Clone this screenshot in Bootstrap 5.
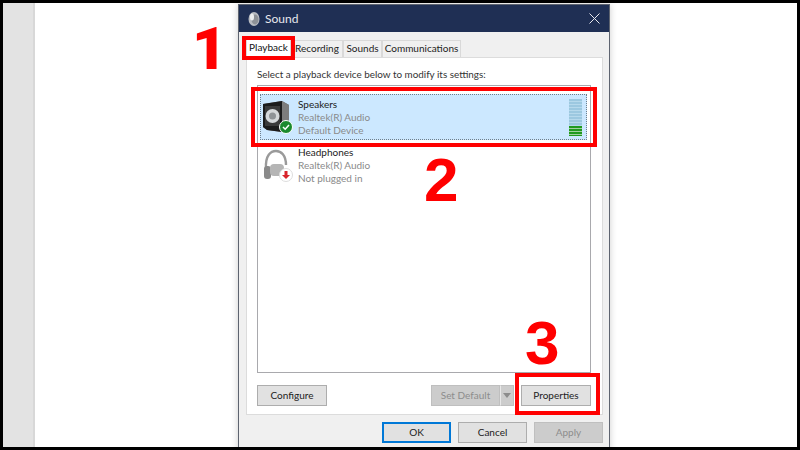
<!DOCTYPE html>
<html lang="en">
<head>
  <meta charset="UTF-8">
  <meta name="viewport" content="width=device-width, initial-scale=1.0">
  <title>Sound</title>
  <link href="https://cdn.jsdelivr.net/npm/bootstrap@5.3.0/dist/css/bootstrap.min.css" rel="stylesheet">
  <style>
    html, body { height: 100%; overflow: hidden; }
    body { background: #fff; font-family: Lato, "Open Sans", "Liberation Sans", sans-serif; font-size: 10px; color: #222; }
    .stage { position: relative; width: 800px; height: 450px; border: 3px solid #000; background: #fff; overflow: hidden; }
    .side-strip { width: 32px; height: 100%; background: #e3e3e3; border-right: 2px solid #d8d8d8; }
    .sound-win { position: absolute; left: 235px; top: 1px; width: 372px; height: 450px; background: #f0f0f0; border-left: 1px solid #5e6470; border-right: 1px solid #5e6470; border-top: 1px solid #5e6470; box-shadow: 0 0 7px rgba(0,0,0,.2); }
    .win-title { height: 27px; background: #1f2f54; color: #e8e8ee; font-size: 12px; padding-left: 8px; gap: 4px; }
    .win-close { margin-left: auto; margin-right: 9px; }
    .tab-strip { padding: 8px 0 0 7px; height: 25px; }
    .tab-item { height: 17px; background: #f0f0f0; border: 1px solid #d9d9d9; border-bottom: 0; white-space: nowrap; line-height: 15px; text-align: center; }
    .tab-on { background: #fff; width: 45px; height: 19px; margin-top: -2px; color: #111; line-height: 17px; }
    .tab-rec { width: 52px; }
    .tab-snd { width: 39px; }
    .tab-com { width: 79px; }
    .tab-pane-box { margin: 0 6px 0 7px; height: 358px; background: #fff; border: 1px solid #dcdcdc; padding: 9px 11px 0 10px; }
    .hint-line { height: 18px; line-height: 14px; color: #333; font-size: 9.9px; }
    .device-box { height: 288px; border: 1px solid #a9a9ad; padding: 1px; }
    .device-row { height: 46px; gap: 6px; padding-left: 3px; }
    .device-on { background: #cce8ff; border: 1px dotted #6f7f8c; margin: 7px 2px 2px 1px; padding-left: 1px; }
    .device-text { line-height: 13px; color: #8a8a8a; }
    .device-text b { font-weight: 400; color: #222; display: block; }
    .icon-slot { position: relative; width: 30px; height: 36px; flex: none; }
    .state-dot { position: absolute; right: -1px; bottom: 1px; width: 14px; height: 14px; }
    .meter-bar { margin-left: auto; margin-right: 4px; width: 13px; height: 37px; background: repeating-linear-gradient(to bottom, #9cc8e0 0 2px, #b6d9ec 2px 3px); position: relative; }
    .meter-fill { position: absolute; left: 0; right: 0; bottom: 0; height: 10px; background: repeating-linear-gradient(to bottom, #1f9a1f 0 2px, #a0cfa0 2px 3px); }
    .btn-row { margin-top: 12px; }
    .win-btn { width: 70px; height: 21px; padding: 0; font-size: 10px; line-height: 19px; border-radius: 0; background: #e1e1e1; border: 1px solid #adadad; color: #222; }
    .win-btn:disabled { background: #cccccc; border-color: #bfbfbf; color: #8c8c8c; opacity: 1; }
    .btn-ok { border: 2px solid #0078d7; line-height: 17px; }
    .btn-foot { width: 69px; }
    .btn-set { width: 69px; }
    .split-arrow { width: 14px; height: 21px; margin-right: 7px; background: #ccc; border: 1px solid #bfbfbf; border-left: 1px solid #e8e8e8; }
    .split-arrow i { display: block; width: 0; height: 0; margin: 7px auto 0; border: 4px solid transparent; border-top: 5px solid #8c8c8c; border-bottom: 0; }
    .foot-row { padding: 7px 6px 0 0; gap: 7px; }
    .red-box { position: absolute; border: 4px solid #f00; }
    .red-tab { left: 239px; top: 33px; width: 53px; height: 24px; }
    .red-row { left: 248px; top: 84px; width: 346px; height: 60px; }
    .red-prop { left: 512px; top: 370px; width: 85px; height: 42px; }
    .red-num { position: absolute; color: #f00; font-family: "Liberation Sans", sans-serif; font-weight: 700; font-size: 62px; line-height: 1; }
    .num-one { left: 189px; top: 16px; font-family: Roboto, "Liberation Sans", sans-serif; font-weight: 900; font-size: 60px; }
    .num-two { left: 421px; top: 146px; }
    .num-three { left: 522px; top: 309px; }
  </style>
</head>
<body>
  <div class="stage">
    <div class="side-strip"></div>

    <div class="sound-win">
      <div class="win-title d-flex align-items-center">
        <svg width="14" height="16" viewBox="0 0 14 16"><ellipse cx="7" cy="8" rx="5.5" ry="7" fill="#b9bcc2"/><ellipse cx="8" cy="8.5" rx="3.5" ry="5" fill="#8d9197"/><ellipse cx="5" cy="6" rx="2" ry="3.5" fill="#eceef0"/></svg>
        <span>Sound</span>
        <svg class="win-close" width="11" height="11" viewBox="0 0 11 11"><path d="M.5.5l10 10M10.5.5l-10 10" stroke="#e8e8ee" stroke-width="1" fill="none"/></svg>
      </div>

      <div class="tab-strip d-flex">
        <div class="tab-item tab-on">Playback</div>
        <div class="tab-item tab-rec">Recording</div>
        <div class="tab-item tab-snd">Sounds</div>
        <div class="tab-item tab-com">Communications</div>
      </div>

      <div class="tab-pane-box">
        <div class="hint-line">Select a playback device below to modify its settings:</div>
        <div class="device-box">
          <div class="device-row device-on d-flex align-items-center">
            <div class="icon-slot">
              <svg width="30" height="36" viewBox="0 0 30 36"><path d="M1 5l19-3 7 4v23l-7 4-15-2-4-3z" fill="#666"/><path d="M1 5l19-3v31l-15-2-4-3z" fill="#1c1c1c"/><path d="M20 2l7 4v23l-7 4z" fill="#7d7d7d"/><rect x="3" y="7" width="15" height="20" fill="#3a3a3a"/><circle cx="10.5" cy="17" r="7" fill="#d5d8da"/><circle cx="10.5" cy="17" r="3.5" fill="#8f9396"/></svg>
              <svg class="state-dot" viewBox="0 0 14 14"><circle cx="7" cy="7" r="6.5" fill="#1b8a2d" stroke="#fff"/><path d="M4 7l2.2 2.2L10 5" stroke="#fff" stroke-width="1.5" fill="none"/></svg>
            </div>
            <div class="device-text"><b>Speakers</b>Realtek(R) Audio<br>Default Device</div>
            <div class="meter-bar"><div class="meter-fill"></div></div>
          </div>
          <div class="device-row d-flex align-items-center">
            <div class="icon-slot">
              <svg width="30" height="36" viewBox="0 0 30 36"><path d="M4 22C3 8 9 4 14 4s10 4 10 14" fill="none" stroke="#9a9a9a" stroke-width="2.4"/><rect x="2" y="19" width="7" height="13" rx="3" fill="#8a8a8a"/><rect x="8" y="17" width="14" height="12" rx="4" fill="#b5b5b5"/></svg>
              <svg class="state-dot" viewBox="0 0 14 14"><circle cx="7" cy="7" r="6.5" fill="#fff" stroke="#ddd"/><path d="M5.5 3h3v4H11L7 11 3 7h2.5z" fill="#d8232a"/></svg>
            </div>
            <div class="device-text"><b>Headphones</b>Realtek(R) Audio<br>Not plugged in</div>
          </div>
        </div>
        <div class="btn-row d-flex">
          <button class="win-btn">Configure</button>
          <div class="d-flex ms-auto">
            <button class="win-btn btn-set" disabled>Set Default</button>
            <div class="split-arrow"><i></i></div>
            <button class="win-btn">Properties</button>
          </div>
        </div>
      </div>

      <div class="foot-row d-flex justify-content-end">
        <button class="win-btn btn-foot btn-ok">OK</button>
        <button class="win-btn btn-foot">Cancel</button>
        <button class="win-btn btn-foot" disabled>Apply</button>
      </div>
    </div>

    <div class="red-box red-tab"></div>
    <div class="red-box red-row"></div>
    <div class="red-box red-prop"></div>
    <div class="red-num num-one">1</div>
    <div class="red-num num-two">2</div>
    <div class="red-num num-three">3</div>
  </div>
</body>
</html>
